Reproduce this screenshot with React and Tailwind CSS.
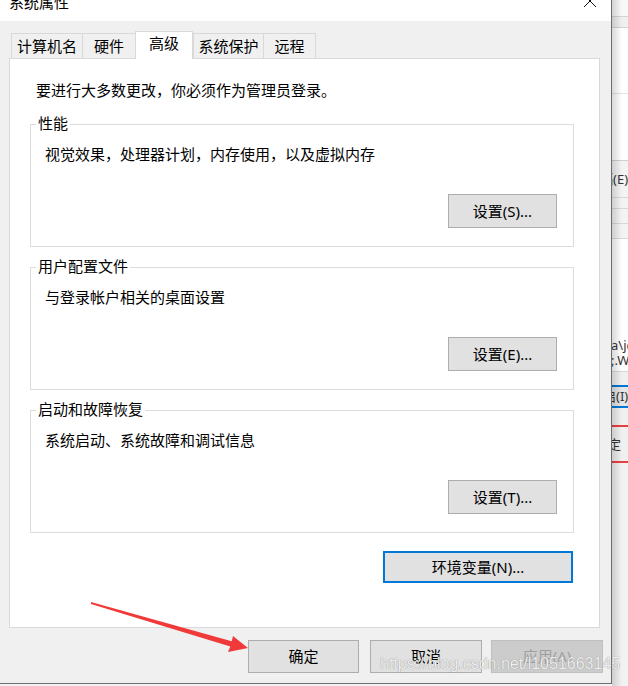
import React from "react";

const font = "font-['Noto_Sans','Noto_Sans_CJK_SC',sans-serif]";

function Tab({ label, w, selected, last }) {
  if (selected) {
    return (
      <div
        className={`h-[28px] ${w} bg-white border-x border-t border-[#d9d9d9] flex items-center justify-center pb-[4px] shrink-0`}
      >
        {label}
      </div>
    );
  }
  return (
    <div
      className={`h-[25px] mb-px ${w} bg-[#f0f0f0] border-t border-l ${last ? "border-r" : ""} border-[#d9d9d9] flex items-center justify-center shrink-0`}
    >
      {label}
    </div>
  );
}

function WinButton({ children, w = "w-[109px]", h = "h-[34px]", bd = "border border-[#adadad]", extra = "" }) {
  return (
    <div
      className={`${w} ${h} bg-[#e1e1e1] ${bd} flex items-center justify-center shrink-0 ${extra}`}
    >
      {children}
    </div>
  );
}

function Group({ legend, desc, button, mt }) {
  return (
    <div className={`relative h-[123px] w-[544px] border border-[#dcdcdc] flex flex-col ${mt}`}>
      <span className="absolute -top-[12px] left-[5px] bg-white px-[2px] leading-[20px]">
        {legend}
      </span>
      <div className="pt-[19px] pl-[14px] leading-[20px]">{desc}</div>
      <div className="mt-[30px] self-end mr-[16px]">
        <WinButton>{button}</WinButton>
      </div>
    </div>
  );
}

function RightStrip() {
  return (
    <div className="relative w-[16px] h-[686px] bg-white overflow-hidden text-[13px] leading-[15px] text-[#333] font-['Noto_Sans','Noto_Sans_CJK_SC',sans-serif] flex flex-col">
      <div className="h-[17px] bg-[#f8f8f8] border-b border-[#d4d4d4] shrink-0" />
      <div className="h-[11px] bg-[#efefef] border-b border-[#d4d4d4] shrink-0" />
      <div className="h-[66px] bg-white border-b border-[#e3e3e3] shrink-0" />
      <div className="h-[67px] bg-white border-b border-[#cfcfcf] shrink-0" />
      <div className="h-[37px] bg-[#f3f3f3] border-b border-[#d8d8d8] flex items-center shrink-0 whitespace-nowrap">
        <span className="-ml-[12px]">隔(E)</span>
      </div>
      <div className="h-[11px] bg-[#f3f3f3] border-b border-[#d8d8d8] shrink-0" />
      <div className="h-[15px] bg-[#f3f3f3] border-b border-[#d8d8d8] shrink-0" />
      <div className="h-[15px] bg-[#f3f3f3] border-b border-[#d8d8d8] shrink-0" />
      <div className="h-[95px] bg-white shrink-0" />
      <div className="h-[38px] bg-white border-b border-[#d8d8d8] whitespace-nowrap flex flex-col justify-center shrink-0">
        <span className="-ml-[1px]">a\jd</span>
        <span className="-ml-[1px]">;.W</span>
      </div>
      <div className="h-[13px] bg-[#f0f0f0] shrink-0" />
      <div className="h-[23px] bg-[#e5e5e5] border-y-2 border-[#0078d7] flex items-center whitespace-nowrap shrink-0">
        <span className="-ml-[9px]">启(I).</span>
      </div>
      <div className="h-[17px] bg-[#f0f0f0] shrink-0" />
      <div className="h-[2px] bg-[#e84040] shrink-0" />
      <div className="h-[34px] bg-[#f0f0f0] flex items-center whitespace-nowrap shrink-0">
        <span className="-ml-[4px]">定</span>
      </div>
      <div className="h-[2px] bg-[#e84040] shrink-0" />
      <div className="flex-1 bg-[#f2f2f2]" />
      <div className="absolute inset-y-0 left-0 w-[10px] bg-gradient-to-r from-black/15 to-transparent" />
    </div>
  );
}

export default function App() {
  return (
    <div className={`relative w-[628px] h-[686px] overflow-hidden bg-[#f2f2f2] flex text-[15px] text-black ${font}`}>
      {/* dialog window */}
      <div className="w-[612px] h-[684px] border-r border-b border-[#6e6e6e] flex flex-col shrink-0">
        {/* title bar */}
        <div className="h-[21px] bg-white flex justify-between shrink-0 overflow-hidden">
          <div className="pl-[9px] -mt-[5px] leading-[15px] text-[15px]">系统属性</div>
          <svg width="14" height="14" viewBox="0 0 14 14" className="-mt-[6px] mr-[14px]">
            <path d="M1 1 L13 13 M13 1 L1 13" stroke="#111" strokeWidth="1" />
          </svg>
        </div>
        {/* body */}
        <div className="flex-1 bg-[#f0f0f0] pt-[10px] pl-[9px] flex flex-col">
          {/* tabs */}
          <div className="h-[28px] -mb-px relative z-10 flex items-end pl-[2px]">
            <Tab label="计算机名" w="w-[71px]" />
            <Tab label="硬件" w="w-[53px]" />
            <Tab label="高级" w="w-[58px]" selected />
            <Tab label="系统保护" w="w-[70px]" />
            <Tab label="远程" w="w-[53px]" last />
          </div>
          {/* panel */}
          <div className="w-[591px] h-[570px] bg-white border border-[#d9d9d9] flex flex-col">
            <div className="pt-[21px] pl-[26px] leading-[20px]">要进行大多数更改，你必须作为管理员登录。</div>
            <div className="ml-[20px] flex flex-col w-[544px]">
              <Group
                mt="mt-[24px]"
                legend="性能"
                desc="视觉效果，处理器计划，内存使用，以及虚拟内存"
                button="设置(S)..."
              />
              <Group
                mt="mt-[20px]"
                legend="用户配置文件"
                desc="与登录帐户相关的桌面设置"
                button="设置(E)..."
              />
              <Group
                mt="mt-[20px]"
                legend="启动和故障恢复"
                desc="系统启动、系统故障和调试信息"
                button="设置(T)..."
              />
              <div className="mt-[18px] self-end mr-px">
                <WinButton w="w-[190px]" h="h-[32px]" bd="border-2 border-[#0078d7]">
                  环境变量(N)...
                </WinButton>
              </div>
            </div>
          </div>
          {/* bottom buttons */}
          <div className="mt-[12px] flex pl-[239px]">
            <WinButton w="w-[111px]" h="h-[33px]">确定</WinButton>
            <WinButton w="w-[112px]" h="h-[33px]" extra="ml-[11px]">取消</WinButton>
            <div className="ml-[9px] w-[112px] h-[33px] bg-[#cccccc] border border-[#bfbfbf] text-[#a0a0a0] flex items-center justify-center shrink-0">
              应用(A)
            </div>
          </div>
        </div>
      </div>
      <RightStrip />

      {/* red arrow annotation */}
      <svg className="absolute left-0 top-0 pointer-events-none" width="628" height="686">
        <polygon
          points="91,602 231.7,641.2 233,636 248,648 228,652 230.3,646.6 91,604"
          fill="#f03a3a"
        />
      </svg>

      {/* watermark */}
      <div className="absolute left-[380px] top-[654px] text-[16px] leading-[20px] text-[#eeeeee] font-['Liberation_Sans',Arial,sans-serif] [text-shadow:0_0_1px_#7a7a7a] whitespace-nowrap">
        https://blog.csdn.net/l1051663145
      </div>
    </div>
  );
}
